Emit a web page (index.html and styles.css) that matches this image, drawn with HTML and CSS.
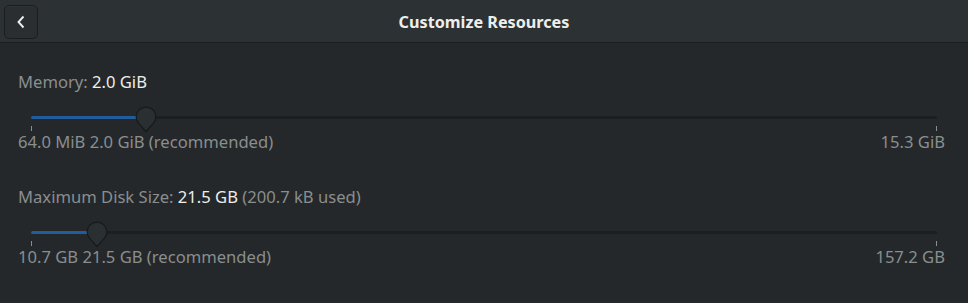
FILE: index.html
```html
<!DOCTYPE html>
<html>
<head>
<meta charset="utf-8">
<link rel="stylesheet" href="styles.css">
</head>
<body>
<div class="window">
  <header class="headerbar">
    <button class="back-btn" aria-label="Back">
      <svg width="10" height="14" viewBox="0 0 10 14"><path d="M7.5 1.5 L2.5 7 L7.5 12.5" fill="none" stroke="#eeeeec" stroke-width="1.9" stroke-linecap="butt" stroke-linejoin="miter"/></svg>
    </button>
    <h1 class="title">Customize Resources</h1>
    <div class="spacer"></div>
  </header>
  <main class="content">
    <section class="resource">
      <div class="res-label"><span class="dim">Memory: </span><span class="value">2.0 GiB</span></div>
      <div class="scale">
        <div class="trough">
          <div class="fill" style="width:12.7%"></div>
          <svg class="knob" style="left:12.7%" width="22" height="27" viewBox="0 0 22 27"><path d="M11 25.5 L3.9 17.6 A9.8 9.8 0 1 1 18.1 17.6 Z" fill="#2a2f31" stroke="#171a1b" stroke-width="1.2"/></svg>
        </div>
        <div class="ticks"><span class="tick"></span><span class="tick"></span></div>
      </div>
      <div class="marks"><span>64.0 MiB 2.0 GiB (recommended)</span><span>15.3 GiB</span></div>
    </section>
    <section class="resource">
      <div class="res-label"><span class="dim">Maximum Disk Size: </span><span class="value">21.5 GB</span><span class="dim"> (200.7 kB used)</span></div>
      <div class="scale">
        <div class="trough">
          <div class="fill" style="width:7.3%"></div>
          <svg class="knob" style="left:7.3%" width="22" height="27" viewBox="0 0 22 27"><path d="M11 25.5 L3.9 17.6 A9.8 9.8 0 1 1 18.1 17.6 Z" fill="#2a2f31" stroke="#171a1b" stroke-width="1.2"/></svg>
        </div>
        <div class="ticks"><span class="tick"></span><span class="tick"></span></div>
      </div>
      <div class="marks"><span>10.7 GB 21.5 GB (recommended)</span><span>157.2 GB</span></div>
    </section>
  </main>
</div>
</body>
</html>
```
FILE: styles.css
```css
html, body {
  margin: 0;
  padding: 0;
  background: #24282a;
  width: 968px;
  height: 303px;
  overflow: hidden;
  font-family: "Noto Sans", "DejaVu Sans", sans-serif;
}
.window {
  display: flex;
  flex-direction: column;
  height: 303px;
}
.headerbar {
  box-sizing: border-box;
  height: 43px;
  background: #2c3133;
  border-bottom: 1px solid #1c1f20;
  display: grid;
  grid-template-columns: 120px 1fr 120px;
  align-items: center;
  padding: 1px 4px 0;
}
.back-btn {
  width: 34px;
  height: 34px;
  border: 1px solid #1b1e1f;
  border-radius: 5px;
  background: #2a2e30;
  display: flex;
  align-items: center;
  justify-content: center;
  padding: 0;
  box-shadow: inset 0 1px 0 rgba(255,255,255,0.03);
}
.title {
  margin: 0;
  text-align: center;
  font-size: 16.2px;
  font-weight: bold;
  color: #eeeeec;
}
.content {
  padding: 0 18px;
  display: flex;
  flex-direction: column;
}
.resource {
  display: flex;
  flex-direction: column;
}
.resource:first-child { margin-top: 28px; }
.resource + .resource { margin-top: 34px; }
.res-label {
  font-size: 16.6px;
  line-height: 22px;
  color: #eeeeec;
}
.dim { color: #8a8e8f; }
.value { color: #eeeeec; }
.scale {
  margin: 0 13px;
  padding-top: 23px;
  display: flex;
  flex-direction: column;
}
.trough {
  position: relative;
  height: 3px;
  background: #1c1f21;
  border-radius: 2px;
}
.fill {
  height: 3px;
  background: #215d9c;
  border-radius: 2px 0 0 2px;
}
.knob {
  position: absolute;
  top: -10px;
  margin-left: -11px;
}
.ticks {
  display: flex;
  justify-content: space-between;
  margin-top: 7px;
}
.tick {
  width: 1px;
  height: 5px;
  background: #8a8e8f;
}
.marks {
  display: flex;
  justify-content: space-between;
  margin-top: 1px;
  font-size: 16.6px;
  line-height: 20px;
  color: #8a8e8f;
  padding-right: 5px;
}
```
